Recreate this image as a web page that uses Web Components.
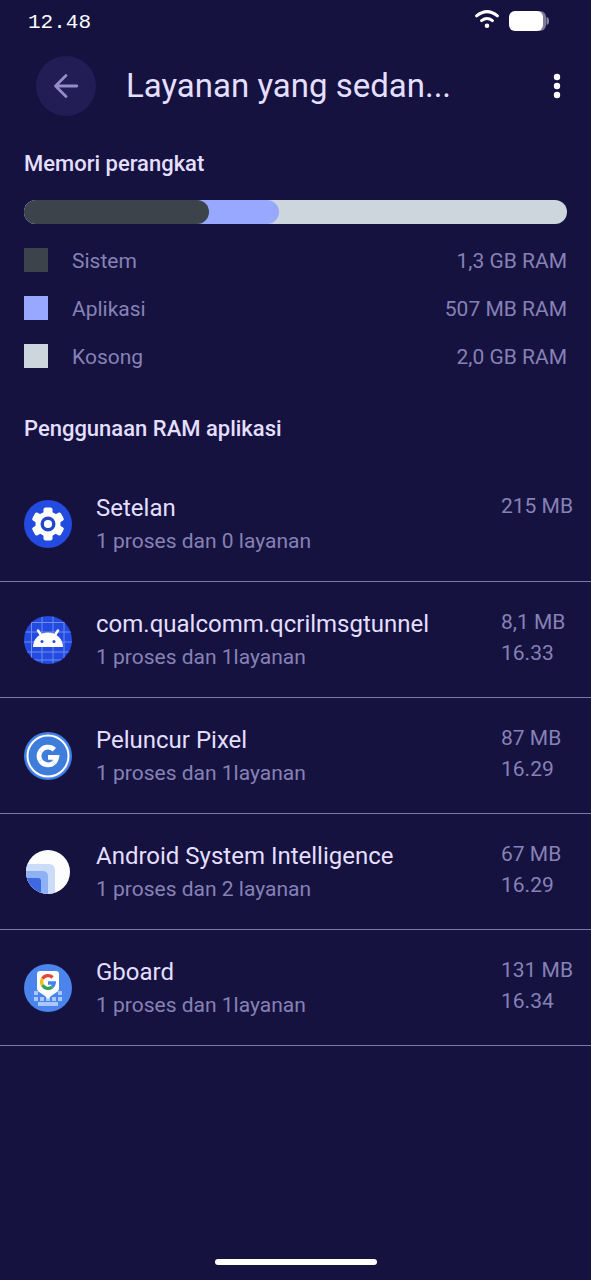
<!DOCTYPE html>
<html lang="id">
<head>
<meta charset="utf-8">
<meta name="viewport" content="width=device-width, initial-scale=1">
<title>Layanan yang sedan…</title>
<style>
  body { margin: 0; background: #151240; }
</style>
</head>
<body>
<running-services></running-services>

<script>
const define = (name, html, setup) => {
  const template = document.createElement('template');
  template.innerHTML = html;
  customElements.define(name, class extends HTMLElement {
    constructor() {
      super();
      this.attachShadow({ mode: 'open' }).append(template.content.cloneNode(true));
    }
    connectedCallback() { if (setup) setup(this, this.shadowRoot); }
  });
};

define('status-bar', `
  <style>
    :host { display: flex; align-items: start; justify-content: space-between; box-sizing: border-box; height: 44px; padding: 10px 41px 0 28px; color: #fff; }
    time { font: 21px/26px "Liberation Mono", monospace; }
    .icons { display: flex; align-items: start; gap: 8px; }
    svg { display: block; }
  </style>
  <time>12.48</time>
  <span class="icons">
    <svg width="26" height="22" viewBox="0 0 26 22" fill="none" stroke="#fff" stroke-width="3" stroke-linecap="round" aria-hidden="true">
      <path d="M2.600 5.800Q13 -2.600 23.400 5.800M7.600 10.600Q13 6.400 18.400 10.600"/><circle cx="13" cy="15.800" r="2.300" fill="#fff" stroke="none"/>
    </svg>
    <svg width="42" height="22" viewBox="0 0 42 22" aria-hidden="true">
      <rect x="4" y="1" width="34" height="20" rx="6" fill="#7d7b98"/>
      <rect x="1" y="1" width="34" height="20" rx="6" fill="#fff"/>
      <path d="M38.500 7q2.500 .5 2.500 4t-2.500 4z" fill="#8a88a5"/>
    </svg>
  </span>`);

define('app-header', `
  <style>
    :host { display: flex; align-items: center; padding: 12px 12px 0 36px; }
    button { display: grid; place-items: center; flex: none; margin: 0; padding: 0; border: 0; background: none; }
    .back { width: 60px; height: 60px; border-radius: 50%; background: #221d54; }
    .more { width: 44px; height: 60px; }
    h1 { flex: 1; min-width: 0; margin: 0; padding-left: 30px; font-size: 33px; line-height: 44px; font-weight: 400; color: #e4dfff; white-space: nowrap; }
  </style>
  <button class="back" aria-label="Kembali">
    <svg width="28" height="28" viewBox="0 0 28 28" fill="none" stroke="#948ccb" stroke-width="2.800" stroke-linecap="round" stroke-linejoin="round"><path d="M24.800 14H4M14 3.500L3.500 14L14 24.500"/></svg>
  </button>
  <h1><slot></slot></h1>
  <button class="more" aria-label="Opsi lainnya">
    <svg width="8" height="28" viewBox="0 0 8 28" fill="#fff"><circle cx="4" cy="5" r="3.200"/><circle cx="4" cy="14" r="3.200"/><circle cx="4" cy="23" r="3.200"/></svg>
  </button>`);

define('section-title', `
  <style>
    :host { display: block; }
    h2 { margin: 0; font-size: 22px; line-height: 28px; font-weight: 500; color: #e4dfff; }
  </style>
  <h2><slot></slot></h2>`);

define('memory-bar', `
  <style>
    :host { display: grid; height: 24px; border-radius: 12px; overflow: hidden; background: #ced6dd; }
    span { grid-area: 1 / 1; border-radius: 0 12px 12px 0; }
    .apps { background: #98a8ff; }
    .system { background: #3c434b; }
  </style>
  <span class="apps"></span><span class="system"></span>`,
  (el, root) => {
    root.querySelector('.system').style.width = el.getAttribute('system');
    root.querySelector('.apps').style.width = el.getAttribute('used');
  });

define('legend-row', `
  <style>
    :host { display: flex; align-items: start; height: 24px; font-size: 21px; line-height: 26px; color: #8781b5; }
    i { width: 24px; height: 24px; margin-right: 24px; background: var(--swatch); }
    .value { margin-left: auto; }
  </style>
  <i></i><span><slot></slot></span><span class="value"><slot name="value"></slot></span>`);

define('service-row', `
  <style>
    :host { display: flex; align-items: center; box-sizing: border-box; height: 116px; padding: 0 16px 0 24px; border-bottom: 1px solid #7d78a6; color: #8781b5; font-size: 21px; }
    .text { flex: 1; min-width: 0; padding-left: 24px; }
    h3 { margin: 0; font-size: 24px; line-height: 34px; font-weight: 400; color: #e4dfff; }
    p { margin: 0; line-height: 32px; }
    .side { width: 74px; height: 66px; line-height: 31px; white-space: nowrap; }
    ::slotted(*) { display: block; }
  </style>
  <slot name="icon"></slot>
  <div class="text"><h3><slot></slot></h3><p><slot name="detail"></slot></p></div>
  <div class="side"><slot name="size"></slot><slot name="time"></slot></div>`);

const gear = Array.from({ length: 6 }, (_, i) =>
  `<rect x="19.500" y="7.500" width="9" height="12" rx="2" transform="rotate(${i * 60} 24 24)"/>`).join('');
const googleArcs = (w, colors) => `
  <g fill="none" stroke-width="${w}">
    <path d="M6.300 -6.300A8.900 8.900 0 0 0 -7.700 -4.450" stroke="${colors[0]}"/>
    <path d="M-7.700 -4.450A8.900 8.900 0 0 0 -7.700 4.450" stroke="${colors[1]}"/>
    <path d="M-7.700 4.450A8.900 8.900 0 0 0 5.700 6.800" stroke="${colors[2]}"/>
    <path d="M5.700 6.800A8.900 8.900 0 0 0 8.700 1.400H0" stroke="${colors[3]}"/>
  </g>`;
const keys = [[10,27],[10,33],[16,33],[22,33],[28,33],[34,33],[34,27]].map(([x, y]) =>
  `<rect x="${x}" y="${y}" width="4" height="4"/>`).join('');
const art = {
  settings: `<circle cx="24" cy="24" r="24" fill="#234be0"/><g fill="#fff">${gear}<circle cx="24" cy="24" r="12.500"/></g><circle cx="24" cy="24" r="5.800" fill="#fff" stroke="#2147c8" stroke-width="3.400"/>`,
  android: `<clipPath id="c"><circle cx="24" cy="24" r="24"/></clipPath><g clip-path="url(#c)"><path fill="#234be0" d="M0 0h48v48H0z"/><path d="M7.500 0v48M18 0v48M29 0v48M40 0v48M0 6.500h48M0 16h48M0 26h48M0 36h48M0 44h48" stroke="#6f8bf4"/></g>
    <path d="M9 31a15 14.500 0 0 1 30 0z" fill="#fff"/><path d="M14 14.500l4 6M34 14.500l-4 6" stroke="#fff" stroke-width="2.600" stroke-linecap="round"/><circle cx="18" cy="25.500" r="1.500" fill="#234be0"/><circle cx="30" cy="25.500" r="1.500" fill="#234be0"/>`,
  launcher: `<circle cx="24" cy="24" r="24" fill="#3f80e8"/><circle cx="24" cy="24" r="20.500" fill="#3f7ddd" stroke="#fff" stroke-width="2"/><g transform="translate(24 24)">${googleArcs(4.800, ['#fff','#fff','#fff','#fff'])}</g>`,
  intelligence: `<clipPath id="c"><circle cx="24" cy="24" r="22"/></clipPath><g clip-path="url(#c)"><path fill="#fdfdff" d="M0 0h48v48H0z"/><path fill="#cbdcfa" d="M0 16h25a6 6 0 0 1 6 6v26H0z"/><path fill="#8fb1f3" d="M0 23h19a5 5 0 0 1 5 5v20H0z"/><path fill="#3d6ae0" d="M0 30h14a3 3 0 0 1 3 3v15H0z"/></g>`,
  gboard: `<circle cx="24" cy="24" r="24" fill="#4a84ec"/><g fill="#a9c8fb">${keys}<path d="M14 38h20v4H14z"/></g><path d="M16 7h16a3 3 0 0 1 3 3v15.500l-2 2.500-6 4-3 3-3-3-6-4-2-2.500V10a3 3 0 0 1 3-3z" fill="#fff"/><g transform="translate(24 18) scale(.72)">${googleArcs(4.600, ['#e5443a','#f6bb1c','#36a354','#4484ee'])}</g>`
};
define('app-icon', `
  <style>:host { display: block; flex: none; width: 48px; height: 48px; } svg { display: block; }</style>
  <svg width="48" height="48" viewBox="0 0 48 48" aria-hidden="true"></svg>`,
  (el, root) => { root.querySelector('svg').innerHTML = art[el.getAttribute('name')]; });

define('running-services', `
  <style>
    :host { display: flex; flex-direction: column; min-height: 100vh; box-sizing: border-box; background: #151240; font-family: Roboto, sans-serif; }
    .memory { padding: 34px 24px 0; }
    memory-bar { margin: 22px 0 24px; }
    .legend { display: grid; gap: 24px; margin-bottom: 47px; }
    .services { padding-top: 23px; }
    .home { width: 162px; height: 6px; margin: auto auto 15px; border-radius: 3px; background: #fff; }
  </style>
  <status-bar></status-bar>
  <app-header>Layanan yang sedan...</app-header>
  <main>
    <section class="memory">
      <section-title>Memori perangkat</section-title>
      <memory-bar system="34%" used="47%"></memory-bar>
      <div class="legend">
        <legend-row style="--swatch:#3c434b">Sistem<span slot="value">1,3 GB RAM</span></legend-row>
        <legend-row style="--swatch:#98a8ff">Aplikasi<span slot="value">507 MB RAM</span></legend-row>
        <legend-row style="--swatch:#ced6dd">Kosong<span slot="value">2,0 GB RAM</span></legend-row>
      </div>
      <section-title>Penggunaan RAM aplikasi</section-title>
    </section>
    <section class="services">
      <service-row><app-icon slot="icon" name="settings"></app-icon>Setelan<span slot="detail">1 proses dan 0 layanan</span><span slot="size">215 MB</span></service-row>
      <service-row><app-icon slot="icon" name="android"></app-icon>com.qualcomm.qcrilmsgtunnel<span slot="detail">1 proses dan 1layanan</span><span slot="size">8,1 MB</span><span slot="time">16.33</span></service-row>
      <service-row><app-icon slot="icon" name="launcher"></app-icon>Peluncur Pixel<span slot="detail">1 proses dan 1layanan</span><span slot="size">87 MB</span><span slot="time">16.29</span></service-row>
      <service-row><app-icon slot="icon" name="intelligence"></app-icon>Android System Intelligence<span slot="detail">1 proses dan 2 layanan</span><span slot="size">67 MB</span><span slot="time">16.29</span></service-row>
      <service-row><app-icon slot="icon" name="gboard"></app-icon>Gboard<span slot="detail">1 proses dan 1layanan</span><span slot="size">131 MB</span><span slot="time">16.34</span></service-row>
    </section>
  </main>
  <div class="home"></div>`);
</script>
</body>
</html>
